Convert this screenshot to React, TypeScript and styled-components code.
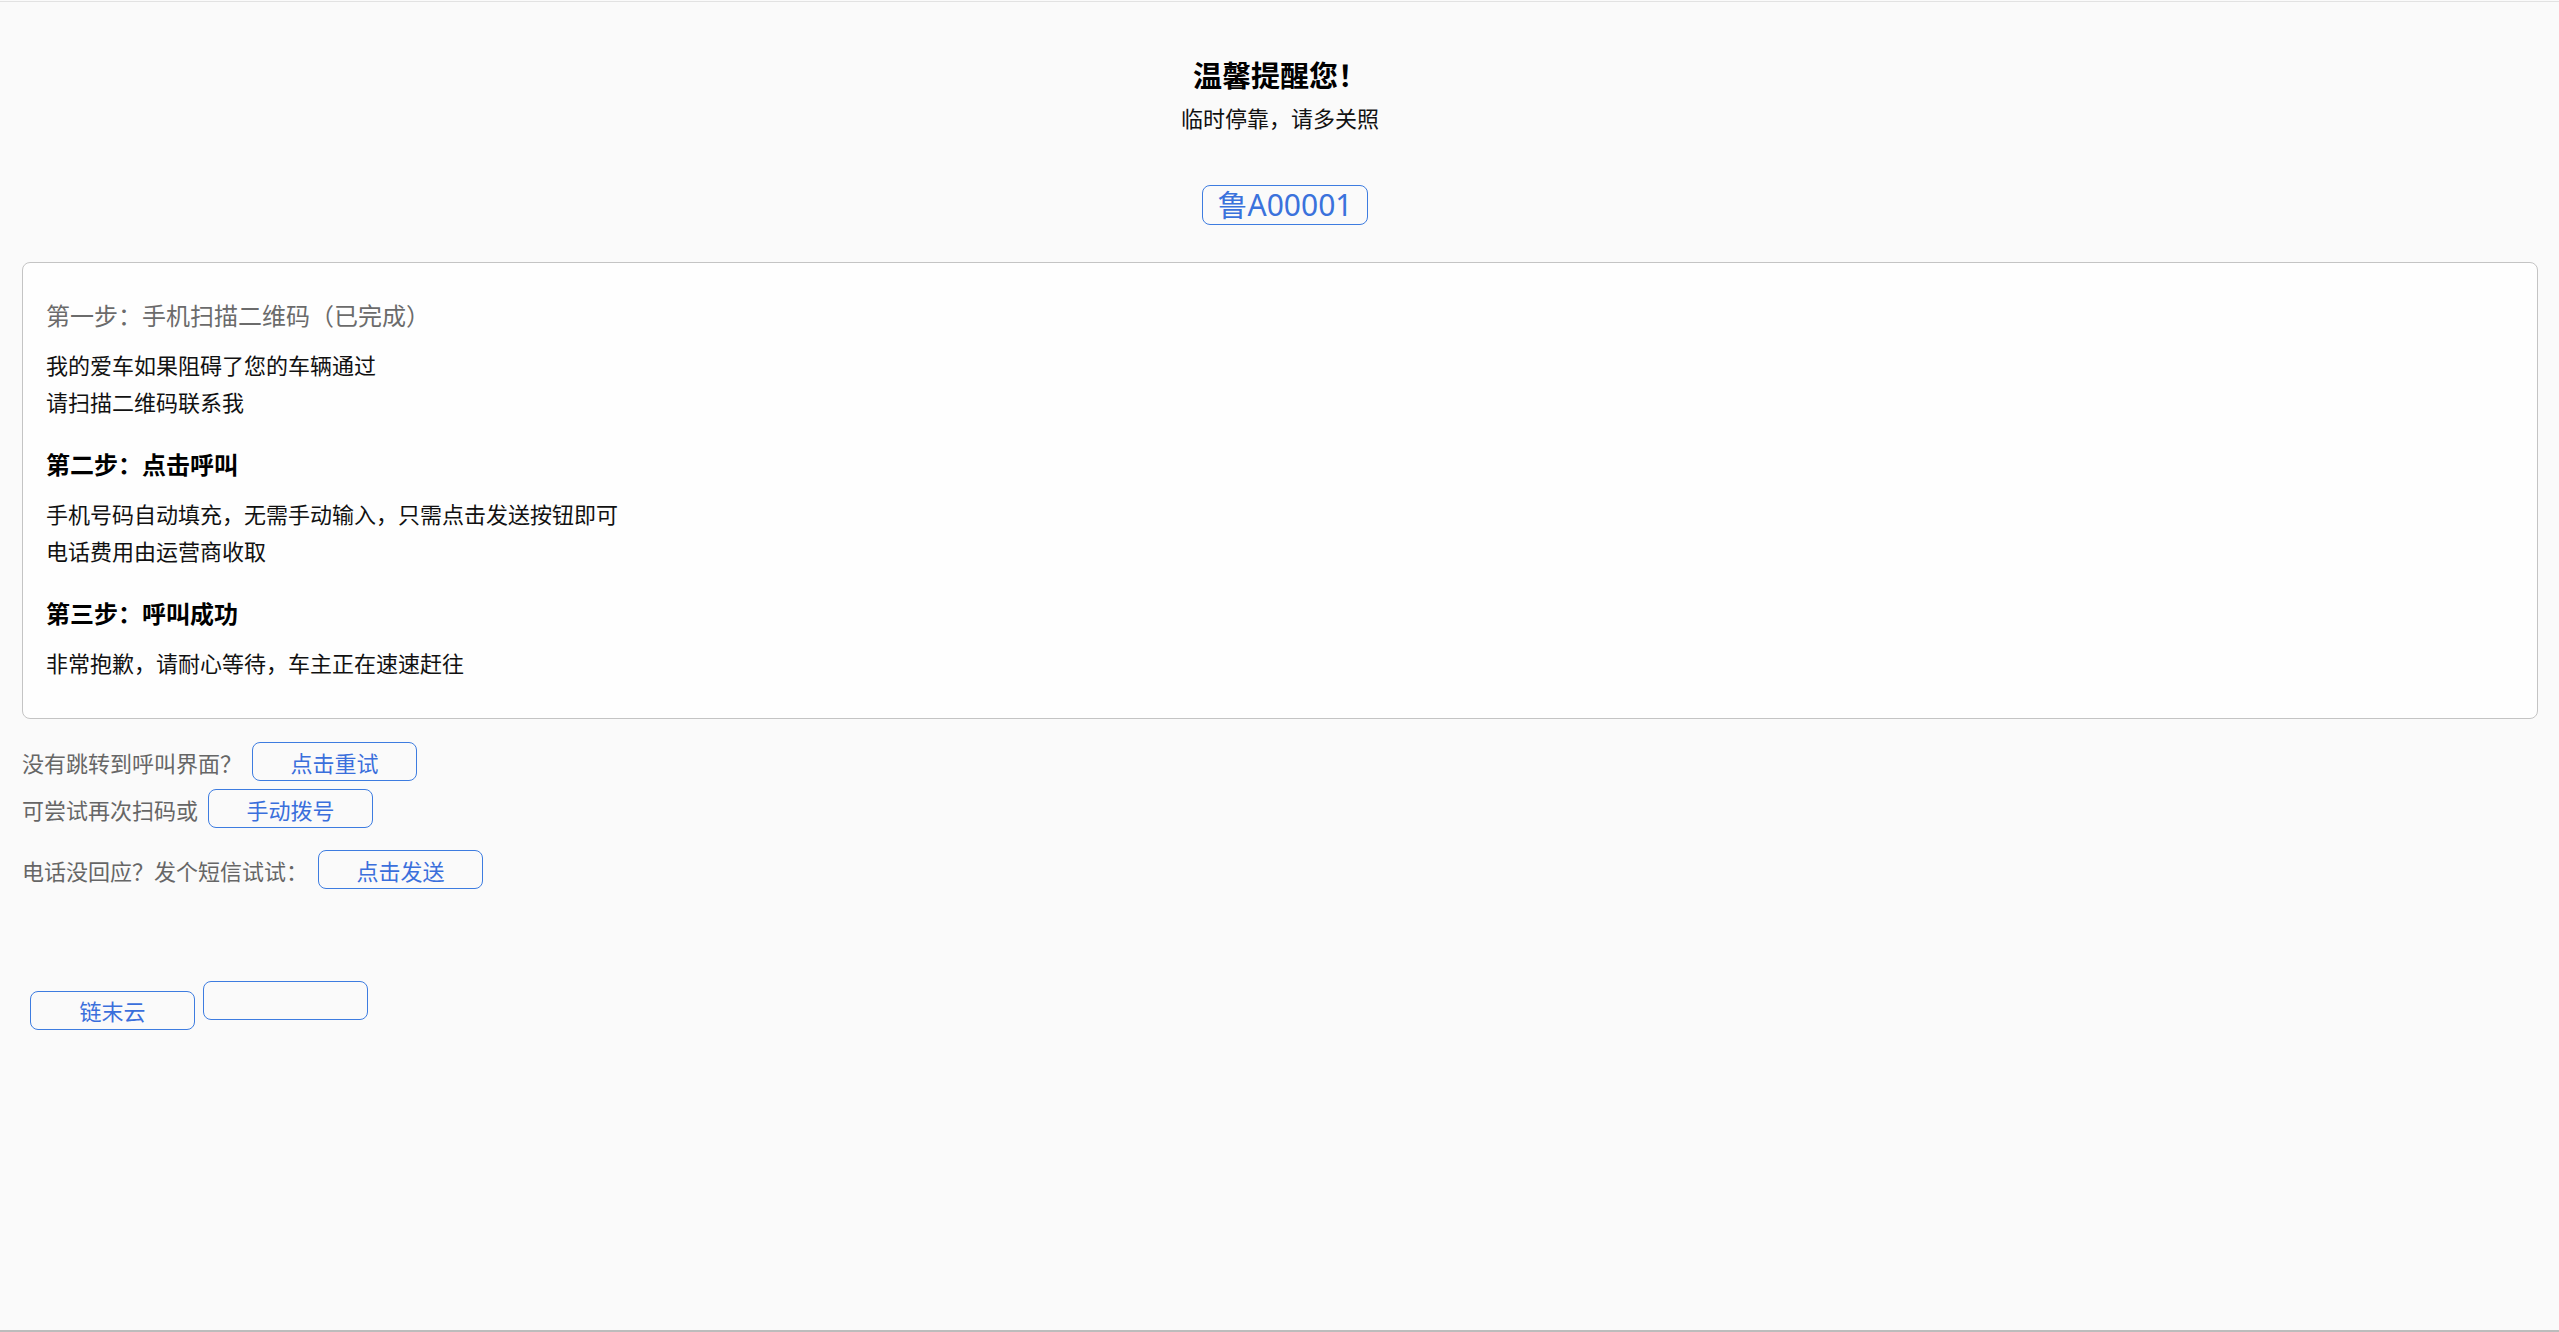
import React from "react";
import styled, { createGlobalStyle } from "styled-components";

const GlobalStyle = createGlobalStyle`
  html, body {
    margin: 0;
    padding: 0;
    background: #fafafa;
  }
  body {
    font-family: "Noto Sans", "Noto Sans CJK SC", sans-serif;
  }
  * { box-sizing: border-box; }
`;

const Page = styled.div`
  margin-top: 1px;
  height: 1331px;
  border-top: 1px solid #e2e2e2;
  border-bottom: 2px solid #bcbcbc;
  background: #fafafa;
  padding: 0 21px 0 22px;
  font-family: "Noto Sans CJK SC", "Noto Sans", sans-serif;
`;

const Header = styled.header`
  display: flex;
  flex-direction: column;
  align-items: center;
  padding-top: 52px;
`;

const Title = styled.h1`
  margin: 0;
  font-size: 29px;
  line-height: 40px;
  font-weight: 700;
  color: #000;
`;

const Subtitle = styled.p`
  margin: 8px 0 0;
  font-size: 22px;
  line-height: 30px;
  color: #111;
`;

const Plate = styled.div`
  margin: 53px 0 0 10px;
  height: 40px;
  padding: 0 15px;
  display: flex;
  align-items: center;
  border: 1px solid #3d7ce0;
  border-radius: 8px;
  font-family: "Noto Sans", "Noto Sans CJK SC", sans-serif;
  font-size: 30px;
  line-height: 1;
  color: #3a72dc;
`;

const Card = styled.section`
  margin-top: 37px;
  padding: 34px 24px 37px 23px;
  border: 1px solid #c4c4c4;
  border-radius: 8px;
  background: #fefefe;
`;

const StepTitle = styled.h3<{ $muted?: boolean }>`
  margin: 26px 0 0;
  &:first-child { margin-top: 0; }
  font-size: 24px;
  line-height: 36px;
  font-weight: ${(p) => (p.$muted ? 400 : 700)};
  color: ${(p) => (p.$muted ? "#6b6b6b" : "#000")};
`;

const StepText = styled.p`
  margin: 13px 0 0;
  font-size: 22px;
  line-height: 37px;
  color: #111;
`;

const Actions = styled.div`
  margin-top: 23px;
  display: flex;
  flex-direction: column;
`;

const ActionRow = styled.div<{ $gap?: number }>`
  display: flex;
  align-items: center;
  margin-top: ${(p) => p.$gap ?? 0}px;
  height: 39px;
`;

const Hint = styled.span`
  font-size: 22px;
  line-height: 30px;
  color: #666;
`;

const OutlineButton = styled.button`
  width: 165px;
  height: 39px;
  margin-left: 10px;
  padding: 0;
  border: 1px solid #3d7ce0;
  border-radius: 8px;
  background: transparent;
  font-family: "Noto Sans CJK SC", "Noto Sans", sans-serif;
  font-size: 22px;
  line-height: 30px;
  color: #3a6fdc;
  cursor: pointer;
`;

const Footer = styled.div`
  margin-top: 92px;
  padding-left: 8px;
  display: flex;
  align-items: baseline;
  gap: 8px;
  & > ${OutlineButton} { margin-left: 0; }
`;

export default function App() {
  return (
    <>
      <GlobalStyle />
      <Page>
        <Header>
          <Title>温馨提醒您！</Title>
          <Subtitle>临时停靠，请多关照</Subtitle>
          <Plate>鲁A00001</Plate>
        </Header>

        <Card>
          <StepTitle $muted>第一步：手机扫描二维码（已完成）</StepTitle>
          <StepText>
            我的爱车如果阻碍了您的车辆通过
            <br />
            请扫描二维码联系我
          </StepText>
          <StepTitle>第二步：点击呼叫</StepTitle>
          <StepText>
            手机号码自动填充，无需手动输入，只需点击发送按钮即可
            <br />
            电话费用由运营商收取
          </StepText>
          <StepTitle>第三步：呼叫成功</StepTitle>
          <StepText>非常抱歉，请耐心等待，车主正在速速赶往</StepText>
        </Card>

        <Actions>
          <ActionRow>
            <Hint>没有跳转到呼叫界面？</Hint>
            <OutlineButton>点击重试</OutlineButton>
          </ActionRow>
          <ActionRow $gap={8}>
            <Hint>可尝试再次扫码或</Hint>
            <OutlineButton>手动拨号</OutlineButton>
          </ActionRow>
          <ActionRow $gap={22}>
            <Hint>电话没回应？发个短信试试：</Hint>
            <OutlineButton>点击发送</OutlineButton>
          </ActionRow>
        </Actions>

        <Footer>
          <OutlineButton>链末云</OutlineButton>
          <OutlineButton aria-label="空" />
        </Footer>
      </Page>
    </>
  );
}
